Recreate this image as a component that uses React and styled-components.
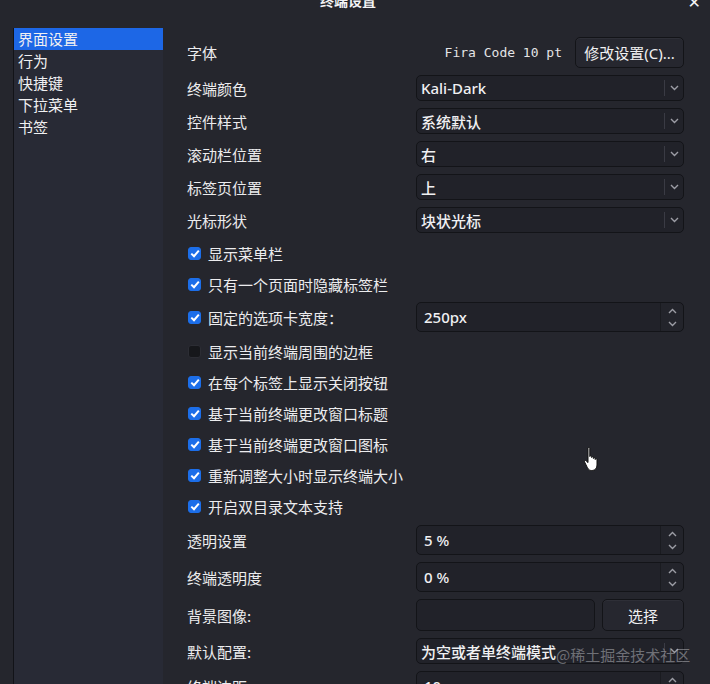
import React from "react";
import styled, { createGlobalStyle } from "styled-components";

const Global = createGlobalStyle`
  html, body { margin: 0; padding: 0; background: #25262d; }
  body { font-family: "Noto Sans", "Noto Sans CJK SC", sans-serif; color: #ececee; }
  * { box-sizing: border-box; }
`;

const Window = styled.div`
  position: relative;
  width: 710px;
  height: 684px;
  overflow: hidden;
  background: #25262d;
  display: flex;
  flex-direction: column;
`;

const TitleBar = styled.div`
  height: 28px;
  display: flex;
  align-items: flex-start;
  padding-right: 9px;
  flex-shrink: 0;
`;

const Title = styled.div`
  margin-left: 320px;
  margin-top: -10px;
  font-size: 14px;
  line-height: 20px;
  font-weight: 700;
  color: #f4f4f6;
  font-family: "Noto Sans CJK SC", sans-serif;
`;

const Close = styled.div`
  margin-left: auto;
  margin-top: -7px;
  font-size: 16px;
  line-height: 20px;
  font-weight: 700;
  color: #f4f4f6;
  font-family: "DejaVu Sans", sans-serif;
`;

const Body = styled.div`
  flex: 1;
  display: flex;
  padding-left: 13px;
  min-height: 0;
`;

const Sidebar = styled.div`
  width: 150px;
  flex-shrink: 0;
  background: #282a35;
  border-left: 1px solid #121318;
  display: flex;
  flex-direction: column;
  margin-right: 2px;
`;

const NavItem = styled.div`
  height: 22px;
  line-height: 22px;
  padding-left: 4px;
  font-size: 15px;
  font-family: "Noto Sans CJK SC", sans-serif;
  color: #f0f0f2;
  background: ${(p) => (p.$active ? "#1d67e6" : "transparent")};
`;

const Main = styled.div`
  flex: 1;
  padding: 9px 26px 0 22px;
  display: flex;
  flex-direction: column;
`;

const Section = styled.div`
  display: flex;
  flex-direction: column;
  gap: ${(p) => p.$gap || 0}px;
  margin-top: ${(p) => p.$mt || 0}px;
`;

const Row = styled.div`
  display: grid;
  grid-template-columns: 229px 1fr;
  align-items: center;
  height: ${(p) => p.$h}px;
  margin-bottom: ${(p) => p.$mb || 0}px;
`;

const Label = styled.div`
  font-size: 15px;
  font-family: "Noto Sans CJK SC", sans-serif;
  color: #ececee;
  white-space: nowrap;
`;

const FontControls = styled.div`
  display: flex;
  align-items: center;
  justify-content: flex-end;
  gap: 13px;
  height: 100%;
`;

const Mono = styled.div`
  font-family: "DejaVu Sans Mono", monospace;
  font-size: 13px;
  color: #e4e4e6;
`;

const Button = styled.div`
  height: ${(p) => p.$h || 31}px;
  width: ${(p) => p.$w}px;
  border: 1px solid #131418;
  border-radius: 5px;
  background: #26272f;
  box-shadow: inset 0 1px 0 rgba(255, 255, 255, 0.04);
  display: flex;
  align-items: center;
  justify-content: center;
  font-size: 15px;
  font-family: "Noto Sans", "Noto Sans CJK SC", sans-serif;
  color: #f0f0f2;
  flex-shrink: 0;
  white-space: nowrap;
`;

const Combo = styled.div`
  height: 26px;
  border: 1px solid #131418;
  border-radius: 5px;
  background: #212229;
  display: flex;
  align-items: center;
  padding-left: 4px;
  font-size: 15px;
  font-family: "Noto Sans", "Noto Sans CJK SC", sans-serif;
  font-weight: 500;
  color: #f0f0f2;
  white-space: nowrap;
  overflow: hidden;
`;

const ComboText = styled.span`
  flex: 1;
`;

const ArrowZone = styled.div`
  width: 19px;
  height: 16px;
  border-left: 1px solid #3a3b44;
  display: flex;
  align-items: center;
  justify-content: center;
  flex-shrink: 0;
`;

const Spin = styled.div`
  height: 30px;
  border: 1px solid #131418;
  border-radius: 5px;
  background: #212229;
  display: flex;
  align-items: stretch;
  font-size: 15px;
  font-family: "Noto Sans", "Noto Sans CJK SC", sans-serif;
  font-weight: 500;
  color: #f0f0f2;
`;

const SpinText = styled.div`
  flex: 1;
  display: flex;
  align-items: center;
  padding-left: 7px;
`;

const SpinArrows = styled.div`
  width: 23px;
  background: #23242b;
  border-left: 1px solid #1a1b20;
  border-radius: 0 5px 5px 0;
  display: flex;
  flex-direction: column;
  align-items: center;
  justify-content: space-between;
  padding: 5px 0 4px;
`;

const Field = styled.div`
  flex: 1;
  height: 32px;
  border: 1px solid #131418;
  border-radius: 5px;
  background: #212229;
`;

const Pair = styled.div`
  display: flex;
  gap: 7px;
  align-items: center;
`;

const CheckLine = styled.div`
  display: flex;
  align-items: center;
  gap: 7px;
  padding-left: 1px;
  font-size: 15px;
  font-family: "Noto Sans CJK SC", sans-serif;
  color: #ececee;
  white-space: nowrap;
`;

const Box = styled.div`
  width: 13px;
  height: 13px;
  border-radius: 3px;
  background: ${(p) => (p.$on ? "#1c6ee9" : "#16171b")};
  border: 1px solid ${(p) => (p.$on ? "#1c6ee9" : "#2c2d34")};
  display: flex;
  align-items: center;
  justify-content: center;
  flex-shrink: 0;
`;

const Watermark = styled.div`
  position: absolute;
  left: 556px;
  top: 644px;
  font-size: 15px;
  font-family: "Noto Sans CJK SC", sans-serif;
  color: rgba(190, 190, 196, 0.5);
  pointer-events: none;
`;

const Cursor = styled.svg`
  position: absolute;
  left: 583px;
  top: 446px;
`;

const Chevron = ({ up }) => (
  <svg width="9" height="6" viewBox="0 0 9 6">
    <path
      d={up ? "M1 5 L4.5 1.5 L8 5" : "M1 1 L4.5 4.5 L8 1"}
      fill="none"
      stroke="#9c9da5"
      strokeWidth="1.4"
    />
  </svg>
);

const Check = () => (
  <svg width="10" height="9" viewBox="0 0 10 9">
    <path d="M1.3 4.6 L4 7.2 L8.8 1.6" fill="none" stroke="#fff" strokeWidth="2" />
  </svg>
);

const ComboBox = ({ children }) => (
  <Combo>
    <ComboText>{children}</ComboText>
    <ArrowZone>
      <Chevron />
    </ArrowZone>
  </Combo>
);

const SpinBox = ({ children }) => (
  <Spin>
    <SpinText>{children}</SpinText>
    <SpinArrows>
      <Chevron up />
      <Chevron />
    </SpinArrows>
  </Spin>
);

const CheckItem = ({ on, children }) => (
  <CheckLine>
    <Box $on={on}>{on && <Check />}</Box>
    <span>{children}</span>
  </CheckLine>
);

const combos = [
  ["终端颜色", "Kali-Dark"],
  ["控件样式", "系统默认"],
  ["滚动栏位置", "右"],
  ["标签页位置", "上"],
  ["光标形状", "块状光标"],
];

const checksAfter = [
  [false, "显示当前终端周围的边框"],
  [true, "在每个标签上显示关闭按钮"],
  [true, "基于当前终端更改窗口标题"],
  [true, "基于当前终端更改窗口图标"],
  [true, "重新调整大小时显示终端大小"],
  [true, "开启双目录文本支持"],
];

export default function App() {
  return (
    <Window>
      <Global />
      <TitleBar>
        <Title>终端设置</Title>
        <Close>✕</Close>
      </TitleBar>
      <Body>
        <Sidebar>
          <NavItem $active>界面设置</NavItem>
          <NavItem>行为</NavItem>
          <NavItem>快捷键</NavItem>
          <NavItem>下拉菜单</NavItem>
          <NavItem>书签</NavItem>
        </Sidebar>
        <Main>
          <Section $gap={7}>
            <Row $h={31}>
              <Label>字体</Label>
              <FontControls>
                <Mono>Fira Code 10 pt</Mono>
                <Button $w={109}>修改设置(C)...</Button>
              </FontControls>
            </Row>
            {combos.map(([l, v]) => (
              <Row $h={26} key={l}>
                <Label>{l}</Label>
                <ComboBox>{v}</ComboBox>
              </Row>
            ))}
          </Section>
          <Section $mt={5}>
            <Row $h={31}>
              <CheckItem on>显示菜单栏</CheckItem>
            </Row>
            <Row $h={31}>
              <CheckItem on>只有一个页面时隐藏标签栏</CheckItem>
            </Row>
            <Row $h={34} $mb={2}>
              <CheckItem on>固定的选项卡宽度：</CheckItem>
              <SpinBox>250px</SpinBox>
            </Row>
            {checksAfter.map(([on, t]) => (
              <Row $h={31} key={t}>
                <CheckItem on={on}>{t}</CheckItem>
              </Row>
            ))}
          </Section>
          <Section $mt={3} $gap={7}>
            <Row $h={30}>
              <Label>透明设置</Label>
              <SpinBox>5 %</SpinBox>
            </Row>
            <Row $h={30}>
              <Label>终端透明度</Label>
              <SpinBox>0 %</SpinBox>
            </Row>
            <Row $h={32}>
              <Label>背景图像:</Label>
              <Pair>
                <Field />
                <Button $w={82} $h={32}>选择</Button>
              </Pair>
            </Row>
            <Row $h={26}>
              <Label>默认配置:</Label>
              <ComboBox>为空或者单终端模式</ComboBox>
            </Row>
            <Row $h={30}>
              <Label>终端边距</Label>
              <SpinBox>10</SpinBox>
            </Row>
          </Section>
        </Main>
      </Body>
      <Cursor width="18" height="26" viewBox="0 0 18 26">
        <path
          d="M5 2.2c0-1 1.8-1 1.8 0V10.5c0-1 1.8-1 1.8 0v1c0-1 1.8-1 1.8 0v1c0-1 1.8-1 1.8 0v1c0-1 1.8-1 1.8 0v5.5c0 3-1.8 5.5-4.8 5.5H8.5c-2 0-3-1-4-2.6L1.6 16c-0.6-1 0.6-2 1.5-1.2L5 16.6Z"
          fill="#fff"
          stroke="#111"
          strokeWidth="1"
          strokeLinejoin="round"
        />
      </Cursor>
      <Watermark>@稀土掘金技术社区</Watermark>
    </Window>
  );
}
